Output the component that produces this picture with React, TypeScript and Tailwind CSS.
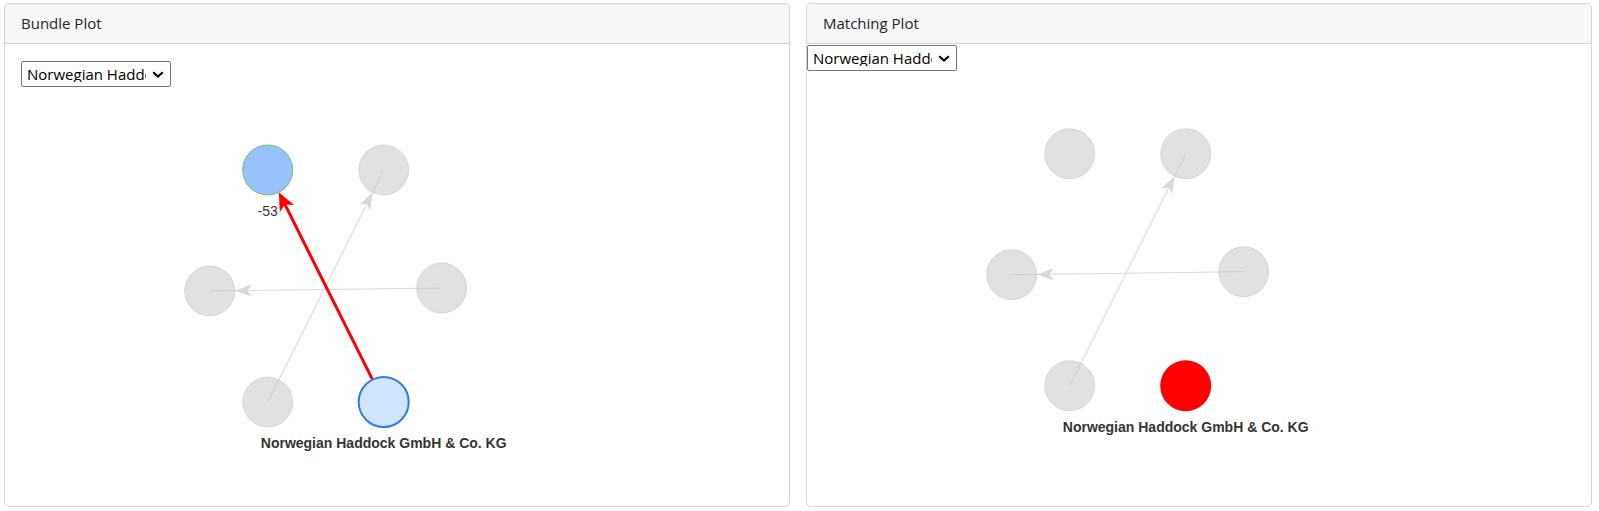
import { useState } from 'react';

type Pt = { x: number; y: number };

// node positions relative to the top-left node
const NODES: Record<string, Pt> = {
  tl: { x: 0, y: 0 },
  tr: { x: 116, y: 0 },
  lm: { x: -58, y: 121 },
  rm: { x: 174, y: 118 },
  bl: { x: 0, y: 232 },
  br: { x: 116, y: 232 },
};

const R = 25;
const COMPANY = 'Norwegian Haddock GmbH & Co. KG';

function arrowHead(tip: Pt, ux: number, uy: number, len: number, half: number) {
  const bx = tip.x - ux * len;
  const by = tip.y - uy * len;
  const nx = -uy;
  const ny = ux;
  const mx = tip.x - ux * len * 0.75;
  const my = tip.y - uy * len * 0.75;
  return `${tip.x},${tip.y} ${bx + nx * half},${by + ny * half} ${mx},${my} ${bx - nx * half},${by - ny * half}`;
}

function Edge({
  from,
  to,
  color,
  width,
  solid,
  len,
  half,
}: {
  from: Pt;
  to: Pt;
  color: string;
  width: number;
  solid?: boolean;
  len: number;
  half: number;
}) {
  const dx = to.x - from.x;
  const dy = to.y - from.y;
  const l = Math.hypot(dx, dy);
  const ux = dx / l;
  const uy = dy / l;
  const tip = { x: to.x - ux * R, y: to.y - uy * R };
  // solid edges stop at the node borders, faded ones run centre to centre
  const start = solid ? { x: from.x + ux * R, y: from.y + uy * R } : from;
  const end = solid ? { x: tip.x - ux * len * 0.7, y: tip.y - uy * len * 0.7 } : to;
  return (
    <g>
      <line x1={start.x} y1={start.y} x2={end.x} y2={end.y} stroke={color} strokeWidth={width} />
      <polygon points={arrowHead(tip, ux, uy, len, half)} fill={color} />
    </g>
  );
}

function GreyNode({ p }: { p: Pt }) {
  return (
    <circle
      cx={p.x}
      cy={p.y}
      r={R}
      fill="#c4c4c4"
      fillOpacity={0.5}
      stroke="#b4b4b4"
      strokeOpacity={0.4}
      strokeWidth={1}
    />
  );
}

function Graph({ ox, oy, bundle }: { ox: number; oy: number; bundle: boolean }) {
  const n = (k: string) => ({ x: NODES[k].x + ox, y: NODES[k].y + oy });
  const labelStyle = { fontFamily: '"Liberation Sans", Arial, sans-serif' };
  return (
    <svg width="760" height="400" className="block">
      <Edge from={n('bl')} to={n('tr')} color="#d8d8d8" width={1} len={17} half={6} />
      <Edge from={n('rm')} to={n('lm')} color="#d8d8d8" width={1} len={17} half={6} />
      {['tl', 'tr', 'lm', 'rm', 'bl'].map((k) =>
        bundle && k === 'tl' ? null : <GreyNode key={k} p={n(k)} />
      )}
      {bundle ? (
        <>
          <Edge from={n('br')} to={n('tl')} color="#ff0000" width={3} solid len={18} half={8} />
          <circle cx={n('tl').x} cy={n('tl').y} r={R} fill="#97c2fc" stroke="#6cc060" strokeWidth={1} />
          <circle cx={n('br').x} cy={n('br').y} r={R} fill="#d2e5ff" stroke="#2b7ce9" strokeWidth={2} />
          <text
            x={n('tl').x}
            y={n('tl').y + 46}
            textAnchor="middle"
            fontSize="14"
            fill="#343434"
            style={labelStyle}
          >
            -53
          </text>
        </>
      ) : (
        <circle cx={n('br').x} cy={n('br').y} r={R + 0.5} fill="#ff0000" />
      )}
      <text
        x={n('br').x}
        y={n('br').y + 46}
        textAnchor="middle"
        fontSize="14"
        fontWeight="bold"
        fill="#343434"
        style={labelStyle}
      >
        {COMPANY}
      </text>
    </svg>
  );
}

function CompanySelect() {
  const [value, setValue] = useState(COMPANY);
  return (
    <div className="relative w-[150px] h-[26px]">
      <select
        value={value}
        onChange={(e) => setValue(e.target.value)}
        className="appearance-none w-full h-full border border-[#767676] rounded-[2px] bg-white pl-[5px] pr-[24px] text-[15px] text-black font-['Open_Sans',sans-serif] leading-none outline-none"
      >
        <option>{COMPANY}</option>
      </select>
      <svg
        className="pointer-events-none absolute right-[7px] top-[10px]"
        width="12"
        height="7"
        viewBox="0 0 12 7"
      >
        <path d="M1.2 1.2 L6 5.6 L10.8 1.2" fill="none" stroke="#000" strokeWidth="2" />
      </svg>
    </div>
  );
}

function Card({ title, children }: { title: string; children: React.ReactNode }) {
  return (
    <div className="flex flex-col h-[504px] rounded-[5px] border border-[#d4d4d4] bg-white overflow-hidden">
      <div className="h-10 shrink-0 flex items-center px-4 border-b border-[#d4d4d4] bg-[#f7f7f7] text-[15px] text-[#212529] font-['Open_Sans',sans-serif]">
        {title}
      </div>
      {children}
    </div>
  );
}

export default function App() {
  return (
    <div className="grid grid-cols-2 gap-4 pl-1 pr-[7px] pt-[3px] h-[511px] bg-white">
      <Card title="Bundle Plot">
        <div className="pt-[17px] pl-4">
          <CompanySelect />
          <Graph ox={246.7} oy={83} bundle />
        </div>
      </Card>
      <Card title="Matching Plot">
        <div className="pt-px">
          <CompanySelect />
          <Graph ox={262.7} oy={82.7} bundle={false} />
        </div>
      </Card>
    </div>
  );
}
